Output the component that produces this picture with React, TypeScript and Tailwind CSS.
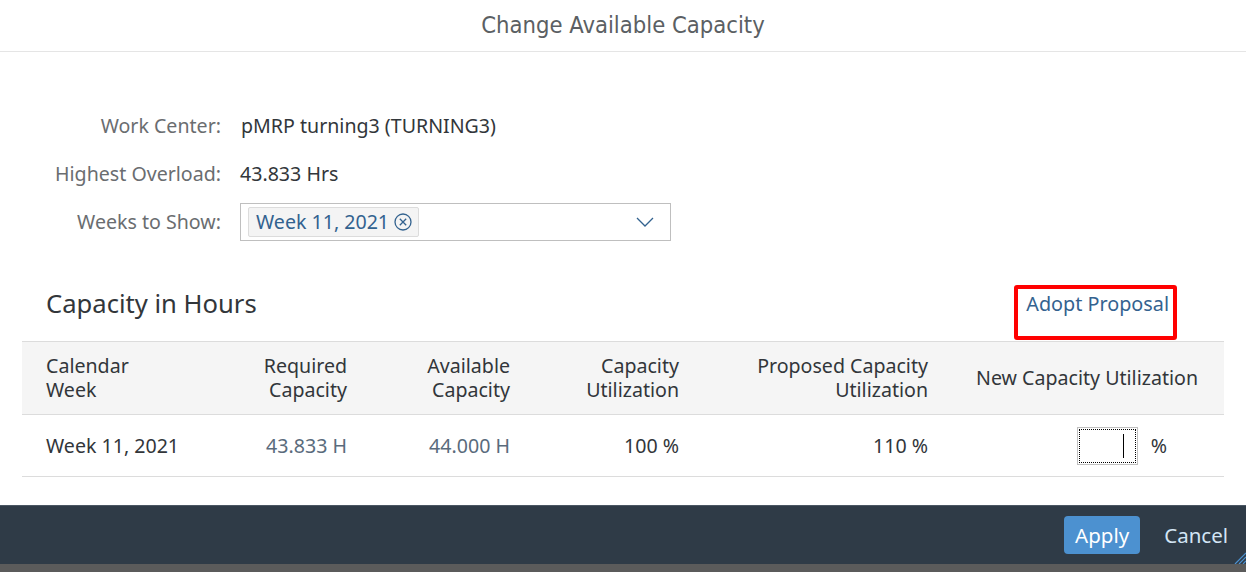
import React from "react";

export default function App() {
  const body = "font-['Noto_Sans','Open_Sans',sans-serif]";
  return (
    <div className={`relative w-[1246px] h-[572px] overflow-hidden bg-white flex flex-col ${body}`}>
      <div className="h-[52px] shrink-0 border-b border-[#e5e5e5] flex items-center justify-center">
        <span className="font-['DejaVu_Sans_Condensed','DejaVu_Sans',sans-serif] font-stretch-condensed text-[23.6px] text-[#5b5f63]">
          Change Available Capacity
        </span>
      </div>

      <div className="flex-1 flex flex-col">
        <div className="pt-[50px] flex flex-col text-[19.6px]">
          <div className="h-[48px] flex items-center">
            <div className="w-[221px] text-right text-[#6a6d70]">Work Center:</div>
            <div className="ml-[20px] text-[#32363a]">pMRP turning3 (TURNING3)</div>
          </div>
          <div className="h-[48px] flex items-center">
            <div className="w-[221px] text-right text-[#6a6d70]">Highest Overload:</div>
            <div className="ml-[19px] text-[#32363a]">43.833 Hrs</div>
          </div>
          <div className="h-[48px] flex items-center">
            <div className="w-[221px] text-right text-[#6a6d70]">Weeks to Show:</div>
            <div className="ml-[19px] w-[431px] h-[38px] border border-[#bfbfbf] bg-white flex items-center pl-[7px] pr-[16px]">
              <div className="h-[30px] flex items-center gap-[5px] pl-[7px] pr-[6px] bg-[#f4f4f4] border border-[#dcdcdc] rounded-[2px] text-[#32628f]">
                <span>Week 11, 2021</span>
                <svg width="18" height="18" viewBox="0 0 18 18" fill="none" stroke="#32628f" strokeWidth="1.3">
                  <circle cx="9" cy="9" r="8" />
                  <path d="M5.8 5.8 L12.2 12.2 M12.2 5.8 L5.8 12.2" />
                </svg>
              </div>
              <div className="flex-1" />
              <svg width="18" height="10" viewBox="0 0 18 10" fill="none" stroke="#32628f" strokeWidth="1.3">
                <path d="M1 1 L9 9 L17 1" />
              </svg>
            </div>
          </div>
        </div>

        <div className="mx-[22px] mt-[38px] h-[57px] flex items-start justify-between pl-[24px] pr-[55px]">
          <span className="leading-[40px] text-[25.6px] text-[#32363a]">Capacity in Hours</span>
          <span className="leading-[40px] text-[19.8px] text-[#34628f]">Adopt Proposal</span>
        </div>

        <div className="mx-[22px] text-[19.6px]">
          <div className="h-[74px] border-t border-b border-[#dcdcdc] bg-[#f5f5f5] grid grid-cols-[178px_147px_163px_169px_249px_270px] items-center leading-[24px] text-[#32363a]">
            <div className="pl-[24px]">Calendar<br />Week</div>
            <div className="text-right">Required<br />Capacity</div>
            <div className="text-right">Available<br />Capacity</div>
            <div className="text-right">Capacity<br />Utilization</div>
            <div className="text-right">Proposed Capacity<br />Utilization</div>
            <div className="text-right">New Capacity Utilization</div>
          </div>
          <div className="h-[62px] border-b border-[#dcdcdc] grid grid-cols-[178px_147px_163px_169px_249px_270px] items-center text-[#32363a]">
            <div className="pl-[24px]">Week 11, 2021</div>
            <div className="text-right text-[#5a6b7c]">43.833 H</div>
            <div className="text-right text-[#5a6b7c]">44.000 H</div>
            <div className="text-right">100 %</div>
            <div className="text-right">110 %</div>
            <div className="flex items-center justify-end pr-[31px]">
              <div className="w-[61px] h-[38px] border border-[#bfbfbf] bg-white p-[1px]">
                <div className="w-full h-full border border-dotted border-black flex items-center justify-end pr-[11px]">
                  <div className="w-[1px] h-[24px] bg-black" />
                </div>
              </div>
              <span className="ml-[13px]">%</span>
            </div>
          </div>
        </div>
      </div>

      <div className="h-[59px] shrink-0 bg-[#2f3b47] border-t border-[#4a5663] flex items-center justify-end pr-[18px] gap-[24px]">
        <button className="h-[38px] px-[11px] rounded-[4px] bg-[#4c91d0] text-white text-[20.5px]">Apply</button>
        <span className="text-[20.5px] text-[#d3e5f5]">Cancel</span>
      </div>
      <div className="h-[8px] shrink-0 bg-[#5b5b5b]" />

      <svg className="absolute right-0 bottom-[8px]" width="12" height="12" viewBox="0 0 12 12" stroke="#4c91d0" strokeWidth="1.2">
        <path d="M1 12 L12 1 M5 12 L12 5 M9 12 L12 9" />
      </svg>

      <div className="absolute left-[1014px] top-[285px] w-[163px] h-[55px] border-[4px] border-[#ff0000] rounded-[3px] pointer-events-none" />
    </div>
  );
}
